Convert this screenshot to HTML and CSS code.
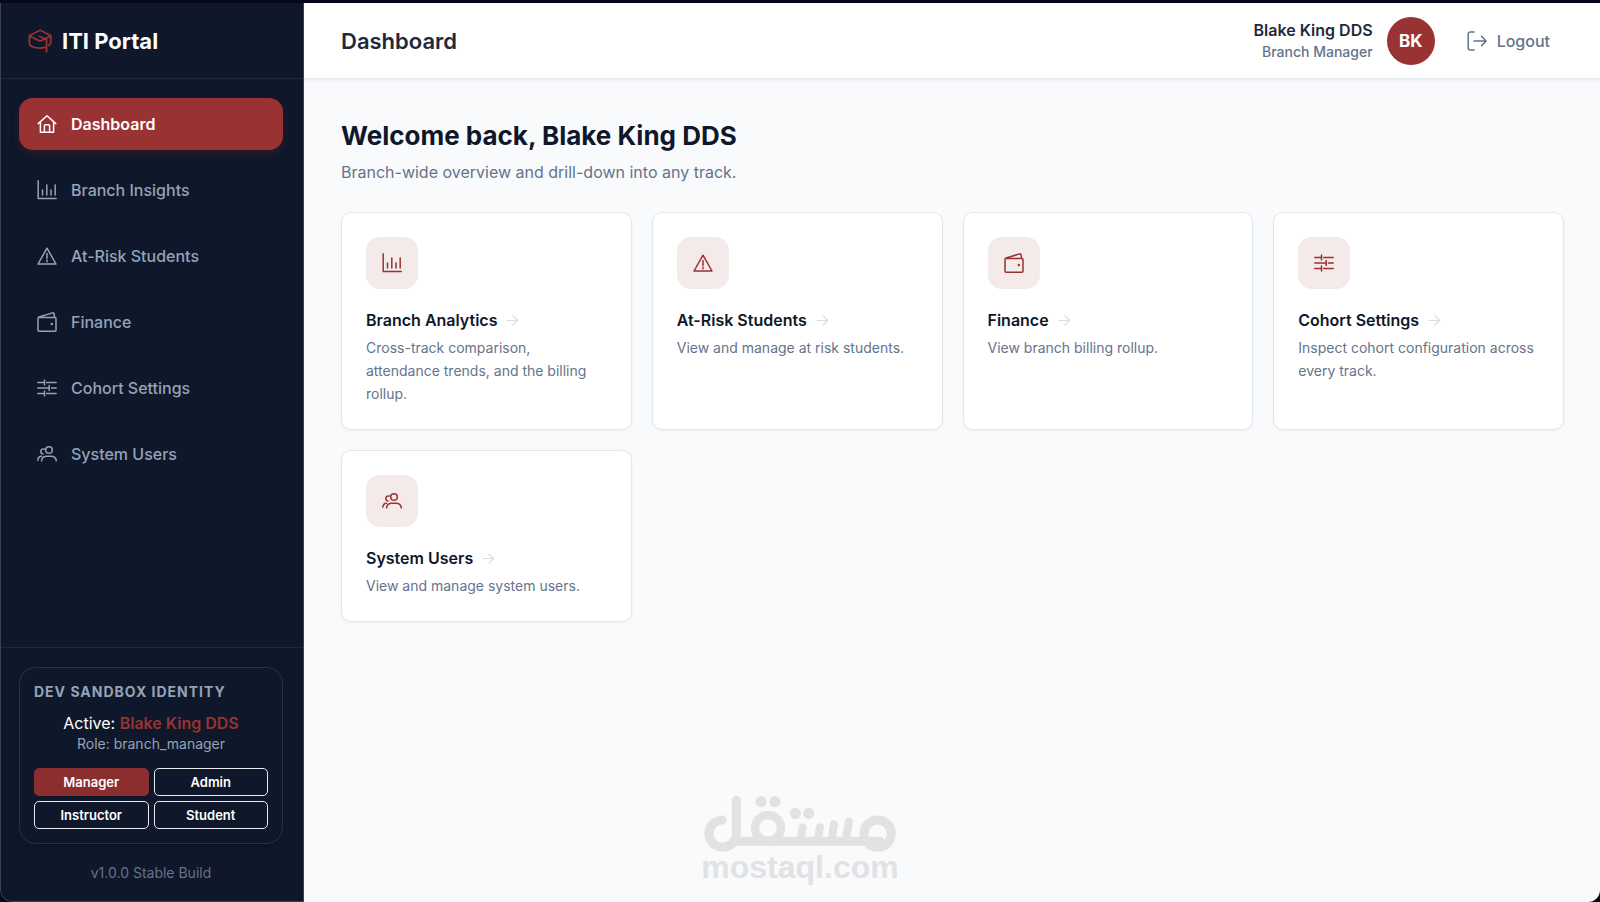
FILE: index.html
```html
<!DOCTYPE html>
<html lang="en">
<head>
<meta charset="utf-8">
<meta name="viewport" content="width=device-width, initial-scale=1">
<title>ITI Portal</title>
<link rel="stylesheet" href="styles.css">
</head>
<body>
<svg class="sprite" aria-hidden="true">
  <symbol id="i-home" viewBox="0 0 20 20"><path d="M1.2 9.6 10 1.8l8.8 7.8M3.4 8v10.2h13.2V8M7.4 18v-6.3a1 1 0 0 1 1-1h3.2a1 1 0 0 1 1 1V18"/></symbol>
  <symbol id="i-chart" viewBox="0 0 20 20"><path d="M1.2.8v17.6h18M5.5 10v5M9.8 5v10M14 10v5M18.2 5v10"/></symbol>
  <symbol id="i-alert" viewBox="0 0 20 20"><path d="M10 2.2 1 18h18zM10 7.6v4.8M10 14.2v1.6"/></symbol>
  <symbol id="i-wallet" viewBox="0 0 20 20"><path d="M2 5.6h16a1 1 0 0 1 1 1v11.6a1 1 0 0 1-1 1H2a1 1 0 0 1-1-1V6.4c0-.7.4-1.2 1.1-1.4L15.5.9c.8-.2 1.5.2 1.6 1l.5 3.5"/><circle class="dot" cx="14.8" cy="12" r="1.2"/></symbol>
  <symbol id="i-sliders" viewBox="0 0 20 20"><path d="M.8 4.4h6.6M9.6 4.4h9.6M7.5 1.9v5M.8 10h11M14.4 10h4.8M12.2 7.5v5M.8 15.6h6.6M9.6 15.6h9.6M7.5 13.1v5"/></symbol>
  <symbol id="i-users" viewBox="0 0 20 20"><circle cx="12" cy="6" r="3.3"/><path d="M4.600 16.800c.3-2.800 2.500-4.600 5.200-4.600h4.200c3 0 5 1.800 5.300 4.600M7.200 5C5.300 4.500 3.800 5.800 3.800 7.500c0 1.300.9 2.300 2.200 2.500M.8 16.200c.2-2.400 1.300-3.900 3.700-4"/></symbol>
  <symbol id="i-arrow" viewBox="0 0 14 14"><path d="M1 7h11.500M7.500 2l5 5-5 5"/></symbol>
  <symbol id="i-logout" viewBox="0 0 20 20"><path d="M7 1H3.200a2 2 0 0 0-2 2v14a2 2 0 0 0 2 2H7M7 10h12M14.600 5.400 19.200 10l-4.600 4.600"/></symbol>
  <symbol id="i-cap" viewBox="0 0 24 24"><path d="M1.200 6.800 11 1.700c.8-.4 1.500-.4 2.300 0L23 6.700l-9.700 4.900c-.9.400-1.600.4-2.500 0zM11.500 7.300l3 1.500 4 1.700v12.400M1.400 7.500v6.700c0 3 4.600 4.900 10.300 4.900 1.800 0 3.600-.2 5-.7M22.800 7.300v6.300c0 1.200-.6 2-2 2.800"/></symbol>
</svg>

<div class="window">
  <aside class="sidebar">
    <div class="brand">
      <svg class="icon brand-icon" aria-hidden="true"><use href="#i-cap"/></svg>
      <span>ITI Portal</span>
    </div>
    <nav class="nav" aria-label="Main">
      <a class="nav-link active" href="#dashboard" aria-current="page"><svg class="icon" aria-hidden="true"><use href="#i-home"/></svg>Dashboard</a>
      <a class="nav-link" href="#insights"><svg class="icon" aria-hidden="true"><use href="#i-chart"/></svg>Branch Insights</a>
      <a class="nav-link" href="#at-risk"><svg class="icon" aria-hidden="true"><use href="#i-alert"/></svg>At-Risk Students</a>
      <a class="nav-link" href="#finance"><svg class="icon" aria-hidden="true"><use href="#i-wallet"/></svg>Finance</a>
      <a class="nav-link" href="#cohort"><svg class="icon" aria-hidden="true"><use href="#i-sliders"/></svg>Cohort Settings</a>
      <a class="nav-link" href="#users"><svg class="icon" aria-hidden="true"><use href="#i-users"/></svg>System Users</a>
    </nav>
    <div class="sidebar-foot">
      <section class="sandbox">
        <h2 class="sandbox-title">Dev Sandbox Identity</h2>
        <p class="sandbox-active">Active: <strong>Blake King DDS</strong></p>
        <p class="sandbox-role">Role: branch_manager</p>
        <div class="roles">
          <button class="role selected" type="button" aria-pressed="true">Manager</button>
          <button class="role" type="button">Admin</button>
          <button class="role" type="button">Instructor</button>
          <button class="role" type="button">Student</button>
        </div>
      </section>
      <p class="version">v1.0.0 Stable Build</p>
    </div>
  </aside>

  <div class="page">
    <header class="topbar">
      <h1 class="topbar-title">Dashboard</h1>
      <div class="account">
        <div class="who">
          <span class="who-name">Blake King DDS</span>
          <span class="who-role">Branch Manager</span>
        </div>
        <span class="avatar">BK</span>
        <button class="logout" type="button"><svg class="icon" aria-hidden="true"><use href="#i-logout"/></svg>Logout</button>
      </div>
    </header>
    <main class="content">
      <h2 class="welcome">Welcome back, Blake King DDS</h2>
      <p class="lead">Branch-wide overview and drill-down into any track.</p>
      <div class="cards">
        <a class="card" href="#insights">
          <span class="tile"><svg class="icon" aria-hidden="true"><use href="#i-chart"/></svg></span>
          <h3 class="card-title">Branch Analytics<svg class="arrow" aria-hidden="true"><use href="#i-arrow"/></svg></h3>
          <p class="card-text">Cross-track comparison, attendance trends, and the billing rollup.</p>
        </a>
        <a class="card" href="#at-risk">
          <span class="tile"><svg class="icon" aria-hidden="true"><use href="#i-alert"/></svg></span>
          <h3 class="card-title">At-Risk Students<svg class="arrow" aria-hidden="true"><use href="#i-arrow"/></svg></h3>
          <p class="card-text">View and manage at risk students.</p>
        </a>
        <a class="card" href="#finance">
          <span class="tile"><svg class="icon" aria-hidden="true"><use href="#i-wallet"/></svg></span>
          <h3 class="card-title">Finance<svg class="arrow" aria-hidden="true"><use href="#i-arrow"/></svg></h3>
          <p class="card-text">View branch billing rollup.</p>
        </a>
        <a class="card" href="#cohort">
          <span class="tile"><svg class="icon" aria-hidden="true"><use href="#i-sliders"/></svg></span>
          <h3 class="card-title">Cohort Settings<svg class="arrow" aria-hidden="true"><use href="#i-arrow"/></svg></h3>
          <p class="card-text">Inspect cohort configuration across every track.</p>
        </a>
        <a class="card" href="#users">
          <span class="tile"><svg class="icon" aria-hidden="true"><use href="#i-users"/></svg></span>
          <h3 class="card-title">System Users<svg class="arrow" aria-hidden="true"><use href="#i-arrow"/></svg></h3>
          <p class="card-text">View and manage system users.</p>
        </a>
      </div>
    </main>
  </div>
</div>

<div class="watermark">
  <svg class="watermark-logo" viewBox="72 46 576 172" role="img" aria-label="مستقل">
    <path d="M126 121A41 41 0 1 0 169 162V62M160 185H600" stroke-width="27"/>
    <circle cx="264" cy="145" r="39" stroke-width="25"/>
    <circle cx="593" cy="162" r="41" stroke-width="27"/>
    <path d="M368 143 362 180M420 143 413 180M462 134 455 180M507 126 500 166" stroke-width="24"/>
    <g class="dots"><circle cx="243" cy="66" r="17"/><circle cx="285" cy="66" r="17"/><circle cx="346" cy="101" r="17"/><circle cx="386" cy="101" r="17"/></g>
  </svg>
  <span>mostaql.com</span>
</div>
</body>
</html>
```

FILE: styles.css
```css
:root {
  --navy: #0f172a;
  --red: #993233;
  --slate: #64748b;
  --line: #e2e8f0;
}

* {
  box-sizing: border-box;
}

body {
  margin: 0;
  min-height: 100vh;
  display: flex;
  position: relative;
  padding-top: 3px;
  background: #05071c;
  font-family: Inter, "Liberation Sans", sans-serif;
  color: var(--navy);
}

h1, h2, h3, p {
  margin: 0;
}

a {
  color: inherit;
  text-decoration: none;
}

button {
  font: inherit;
  cursor: pointer;
}

.sprite {
  position: absolute;
  width: 0;
  height: 0;
}

.icon, .arrow {
  flex: none;
  width: 20px;
  height: 20px;
  fill: none;
  stroke: currentColor;
  stroke-width: 1.5;
  stroke-linecap: round;
  stroke-linejoin: round;
}

.dot {
  fill: currentColor;
  stroke: none;
}

.window {
  flex: 1;
  display: flex;
  overflow: hidden;
  border-radius: 0 0 12px 12px;
}

/* Sidebar */
.sidebar {
  flex: none;
  width: 304px;
  display: flex;
  flex-direction: column;
  background: var(--navy);
  border: 1px solid #3a4356;
  border-top: 0;
  border-bottom-left-radius: 12px;
}

.brand {
  height: 76px;
  display: flex;
  align-items: center;
  gap: 10px;
  padding: 0 27px;
  border-bottom: 1px solid #1e293b;
  color: #fff;
  font-size: 22px;
  font-weight: 700;
}

.brand-icon {
  width: 24px;
  height: 24px;
  color: var(--red);
  stroke-width: 1.8;
}

.nav {
  flex: 1;
  display: flex;
  flex-direction: column;
  gap: 14px;
  padding: 19px 20px 19px 18px;
}

.nav-link {
  height: 52px;
  display: flex;
  align-items: center;
  gap: 14px;
  padding: 0 18px;
  border-radius: 14px;
  color: #94a3b8;
  font-size: 16px;
  font-weight: 500;
}

.nav-link.active {
  background: var(--red);
  box-shadow: 0 4px 8px rgba(153, 50, 51, 0.2);
  color: #fff;
  font-weight: 600;
}

.sidebar-foot {
  padding: 19px 20px 18px 18px;
  border-top: 1px solid #1e293b;
}

.sandbox {
  padding: 14px;
  border: 1px solid #283246;
  border-radius: 16px;
  box-shadow: 0 4px 12px rgba(0, 0, 0, 0.15);
  text-align: center;
}

.sandbox-title {
  color: #94a3b8;
  font-size: 14px;
  line-height: 20px;
  letter-spacing: 1px;
  text-align: left;
  text-transform: uppercase;
}

.sandbox-active {
  margin-top: 10px;
  color: #fff;
  font-size: 16px;
  line-height: 22px;
}

.sandbox-active strong {
  color: var(--red);
  font-weight: 600;
}

.sandbox-role {
  color: #94a3b8;
  font-size: 14px;
  line-height: 20px;
}

.roles {
  display: grid;
  grid-template-columns: 1fr 1fr;
  gap: 5px;
  margin-top: 14px;
}

.role {
  height: 28px;
  padding: 0;
  border: 1px solid #e8ecf2;
  border-radius: 5px;
  background: transparent;
  color: #fff;
  font-size: 13px;
  font-weight: 600;
}

.role.selected {
  background: #8b2e30;
  border-color: #8b2e30;
}

.version {
  margin-top: 19px;
  color: var(--slate);
  font-size: 14px;
  line-height: 20px;
  text-align: center;
}

/* Page */
.page {
  flex: 1;
  min-width: 0;
  background: #f9fafc;
}

.topbar {
  height: 76px;
  display: flex;
  align-items: center;
  justify-content: space-between;
  padding: 0 50px 0 37px;
  background: #fff;
  border-bottom: 1px solid var(--line);
  box-shadow: 0 1px 3px rgba(15, 23, 42, 0.08);
}

.topbar-title {
  color: #1e293b;
  font-size: 22px;
  font-weight: 600;
}

.account {
  display: flex;
  align-items: center;
}

.who {
  display: flex;
  flex-direction: column;
  align-items: flex-end;
  margin-right: 14px;
}

.who-name {
  color: #1e293b;
  font-size: 16px;
  font-weight: 600;
  line-height: 22px;
}

.who-role {
  color: var(--slate);
  font-size: 14px;
  font-weight: 500;
  line-height: 22px;
}

.avatar {
  width: 48px;
  height: 48px;
  display: grid;
  place-items: center;
  margin-right: 32px;
  border-radius: 50%;
  background: var(--red);
  color: #fff;
  font-size: 17px;
  font-weight: 700;
}

.logout {
  display: flex;
  align-items: center;
  gap: 10px;
  padding: 0;
  border: 0;
  background: none;
  color: var(--slate);
  font-size: 16px;
  font-weight: 500;
}

.content {
  padding: 38px 36px 38px 37px;
}

.welcome {
  font-size: 26px;
  font-weight: 700;
  line-height: 38px;
}

.lead {
  margin-top: 4px;
  color: var(--slate);
  font-size: 16px;
  line-height: 26px;
}

.cards {
  display: grid;
  grid-template-columns: repeat(4, 1fr);
  gap: 20px;
  margin-top: 27px;
}

.card {
  padding: 24px;
  background: #fff;
  border: 1px solid var(--line);
  border-radius: 10px;
  box-shadow: 0 1px 3px rgba(15, 23, 42, 0.05);
}

.tile {
  width: 52px;
  height: 52px;
  display: grid;
  place-items: center;
  border-radius: 14px;
  background: #f5eaea;
  color: var(--red);
}

.card-title {
  display: flex;
  align-items: center;
  gap: 9px;
  margin-top: 18px;
  font-size: 16px;
  font-weight: 600;
  line-height: 26px;
}

.arrow {
  width: 13px;
  height: 13px;
  color: #d5dce5;
  stroke-width: 1.3;
}

.card-text {
  margin-top: 3px;
  color: var(--slate);
  font-size: 14px;
  line-height: 23px;
}

/* Watermark floats over the page */
.watermark {
  position: absolute;
  left: 50%;
  bottom: 20px;
  width: 192px;
  margin-left: -96px;
  display: flex;
  flex-direction: column;
  align-items: center;
  color: #e1e2e4;
  font-family: "Liberation Sans", sans-serif;
  font-size: 32px;
  font-weight: 700;
  line-height: 30px;
  pointer-events: none;
}

.watermark-logo {
  width: 100%;
  fill: none;
  stroke: currentColor;
  stroke-linecap: round;
}

.dots {
  fill: currentColor;
  stroke: none;
}
```
